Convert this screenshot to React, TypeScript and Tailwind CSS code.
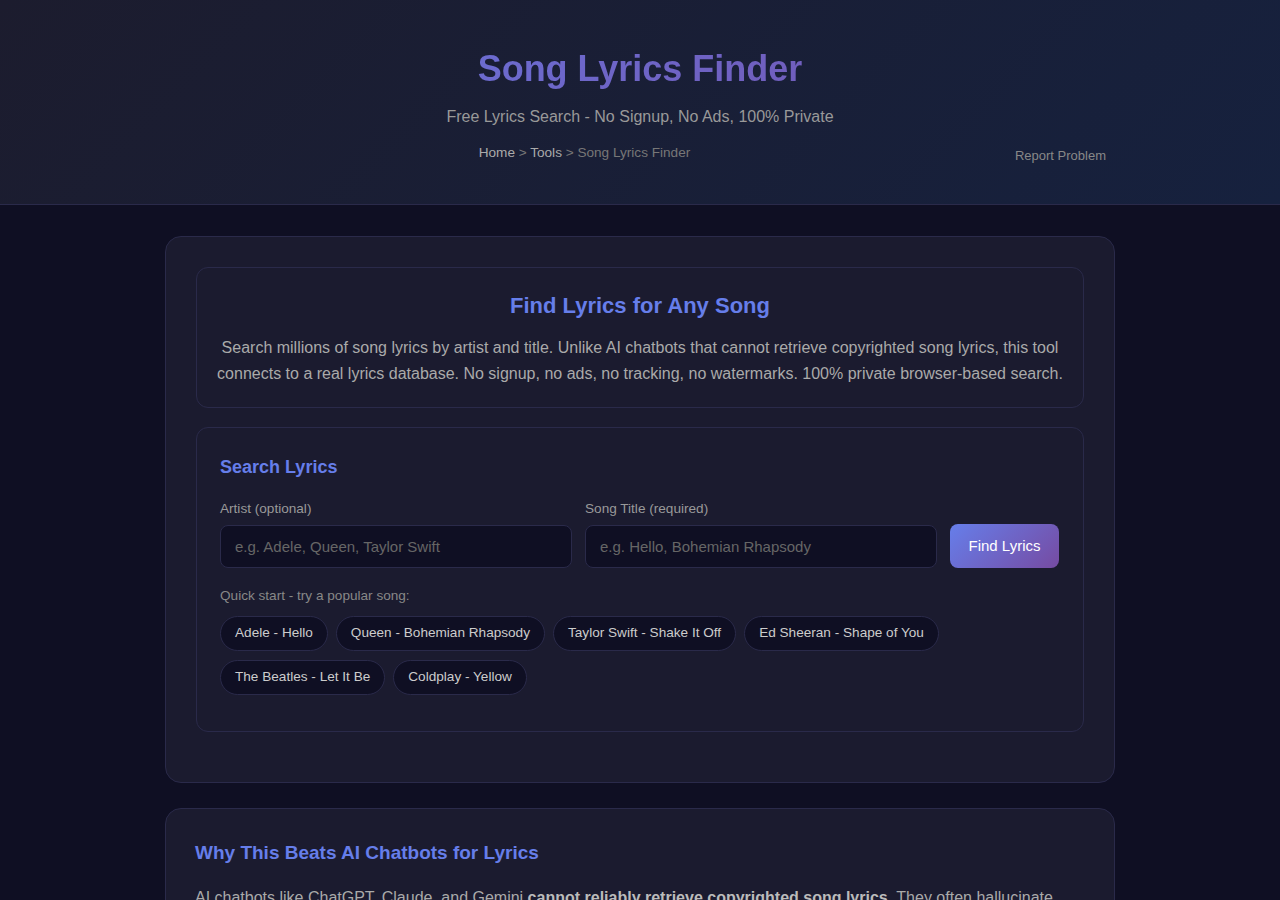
import React, { useState } from 'react';

const popularSongs = [
  { artist: 'Adele', title: 'Hello' },
  { artist: 'Queen', title: 'Bohemian Rhapsody' },
  { artist: 'Taylor Swift', title: 'Shake It Off' },
  { artist: 'Ed Sheeran', title: 'Shape of You' },
  { artist: 'The Beatles', title: 'Let It Be' },
  { artist: 'Coldplay', title: 'Yellow' },
];

const App: React.FC = () => {
  const [artist, setArtist] = useState('');
  const [title, setTitle] = useState('');

  const pickSong = (a: string, t: string) => {
    setArtist(a);
    setTitle(t);
  };

  return (
    <div className="min-h-screen bg-[#0f0f23] font-['Liberation_Sans',Arial,sans-serif] text-[#e0e0e0]">
      {/* header */}
      <header className="h-[205px] border-b border-[#2a2a4a] bg-[linear-gradient(135deg,#1c1c2e_0%,#16213e_100%)] pt-[47px]">
        <h1 className="bg-[linear-gradient(135deg,#667eea_0%,#764ba2_100%)] bg-clip-text text-center text-[36px] leading-[44px] font-bold text-transparent">
          Song Lyrics Finder
        </h1>
        <p className="mt-[16px] text-center text-[16px] leading-[20px] text-[#999]">
          Free Lyrics Search - No Signup, No Ads, 100% Private
        </p>
        <div className="mx-auto mt-[18px] flex w-[932px] items-start">
          <nav className="flex-1 text-center text-[13.6px] leading-[16px] text-[#777]">
            <a href="#" className="text-[#aaa]">Home</a> &gt;{' '}
            <a href="#" className="text-[#aaa]">Tools</a> &gt; Song Lyrics Finder
          </nav>
          <a href="#" className="mt-[3px] ml-[20px] whitespace-nowrap text-[13px] leading-[16px] text-[#888]">
            Report Problem
          </a>
        </div>
      </header>

      <main className="mx-auto w-[950px] pt-[31px] pb-10">
        <section className="rounded-2xl border border-[#2a2a4a] bg-[#1b1b2f] p-[30px] pb-[50px]">
          <div className="rounded-xl border border-[#2a2a4a] px-5 pt-[22px] pb-[21px] text-center">
            <h2 className="text-[22px] leading-[32px] font-bold text-[#667eea]">Find Lyrics for Any Song</h2>
            <p className="mt-[13px] text-[16px] leading-[25.6px] text-[#aaa]">
              Search millions of song lyrics by artist and title. Unlike AI chatbots that cannot retrieve copyrighted song lyrics, this tool connects to a real lyrics database. No signup, no ads, no tracking, no watermarks. 100% private browser-based search.
            </p>
          </div>

          <div className="mt-[19px] rounded-xl border border-[#2a2a4a] pt-[27px] pr-6 pb-[36px] pl-[23px]">
            <h3 className="text-[18px] leading-[24px] font-bold text-[#667eea]">Search Lyrics</h3>

            <div className="mt-[22px] flex items-end gap-[13px]">
              <div className="flex-1">
                <label className="block text-[13.6px] leading-[16px] text-[#999]">Artist (optional)</label>
                <input
                  value={artist}
                  onChange={(e) => setArtist(e.target.value)}
                  placeholder="e.g. Adele, Queen, Taylor Swift"
                  className="mt-[8px] h-[43px] w-full rounded-lg border border-[#2a2a4a] bg-[#0f0f23] px-[14px] text-[15px] text-[#e0e0e0] placeholder-[#666] outline-none"
                />
              </div>
              <div className="flex-1">
                <label className="block text-[13.6px] leading-[16px] text-[#999]">Song Title (required)</label>
                <input
                  value={title}
                  onChange={(e) => setTitle(e.target.value)}
                  placeholder="e.g. Hello, Bohemian Rhapsody"
                  className="mt-[8px] h-[43px] w-full rounded-lg border border-[#2a2a4a] bg-[#0f0f23] px-[14px] text-[15px] text-[#e0e0e0] placeholder-[#666] outline-none"
                />
              </div>
              <button className="h-[44px] w-[109px] rounded-lg bg-[linear-gradient(135deg,#667eea_0%,#764ba2_100%)] text-[15px] text-white">
                Find Lyrics
              </button>
            </div>

            <p className="mt-[20px] text-[13.6px] leading-[16px] text-[#888]">Quick start - try a popular song:</p>
            <div className="mt-[12px] flex flex-wrap gap-x-[8px] gap-y-[9px]">
              {popularSongs.map((s) => (
                <button
                  key={s.title}
                  onClick={() => pickSong(s.artist, s.title)}
                  className="h-[35px] rounded-full border border-[#2a2a4a] bg-[#0f0f23] px-[14px] text-[13.6px] text-[#ccc]"
                >
                  {s.artist} - {s.title}
                </button>
              ))}
            </div>
          </div>
        </section>

        <section className="mt-[25px] rounded-2xl border border-[#2a2a4a] bg-[#1b1b2f] px-[29px] pt-[32px] pb-[30px]">
          <h2 className="text-[19px] leading-[24px] font-bold text-[#667eea]">Why This Beats AI Chatbots for Lyrics</h2>
          <p className="mt-[20px] text-[16px] leading-[25.6px] text-[#aaa]">
            AI chatbots like ChatGPT, Claude, and Gemini <strong className="text-[#bbb]">cannot reliably retrieve copyrighted song lyrics</strong>. They often hallucinate lines, mix up verses, or refuse outright. This tool looks up the actual lyrics from a real database instead.
          </p>
        </section>
      </main>
    </div>
  );
};

export default App;
